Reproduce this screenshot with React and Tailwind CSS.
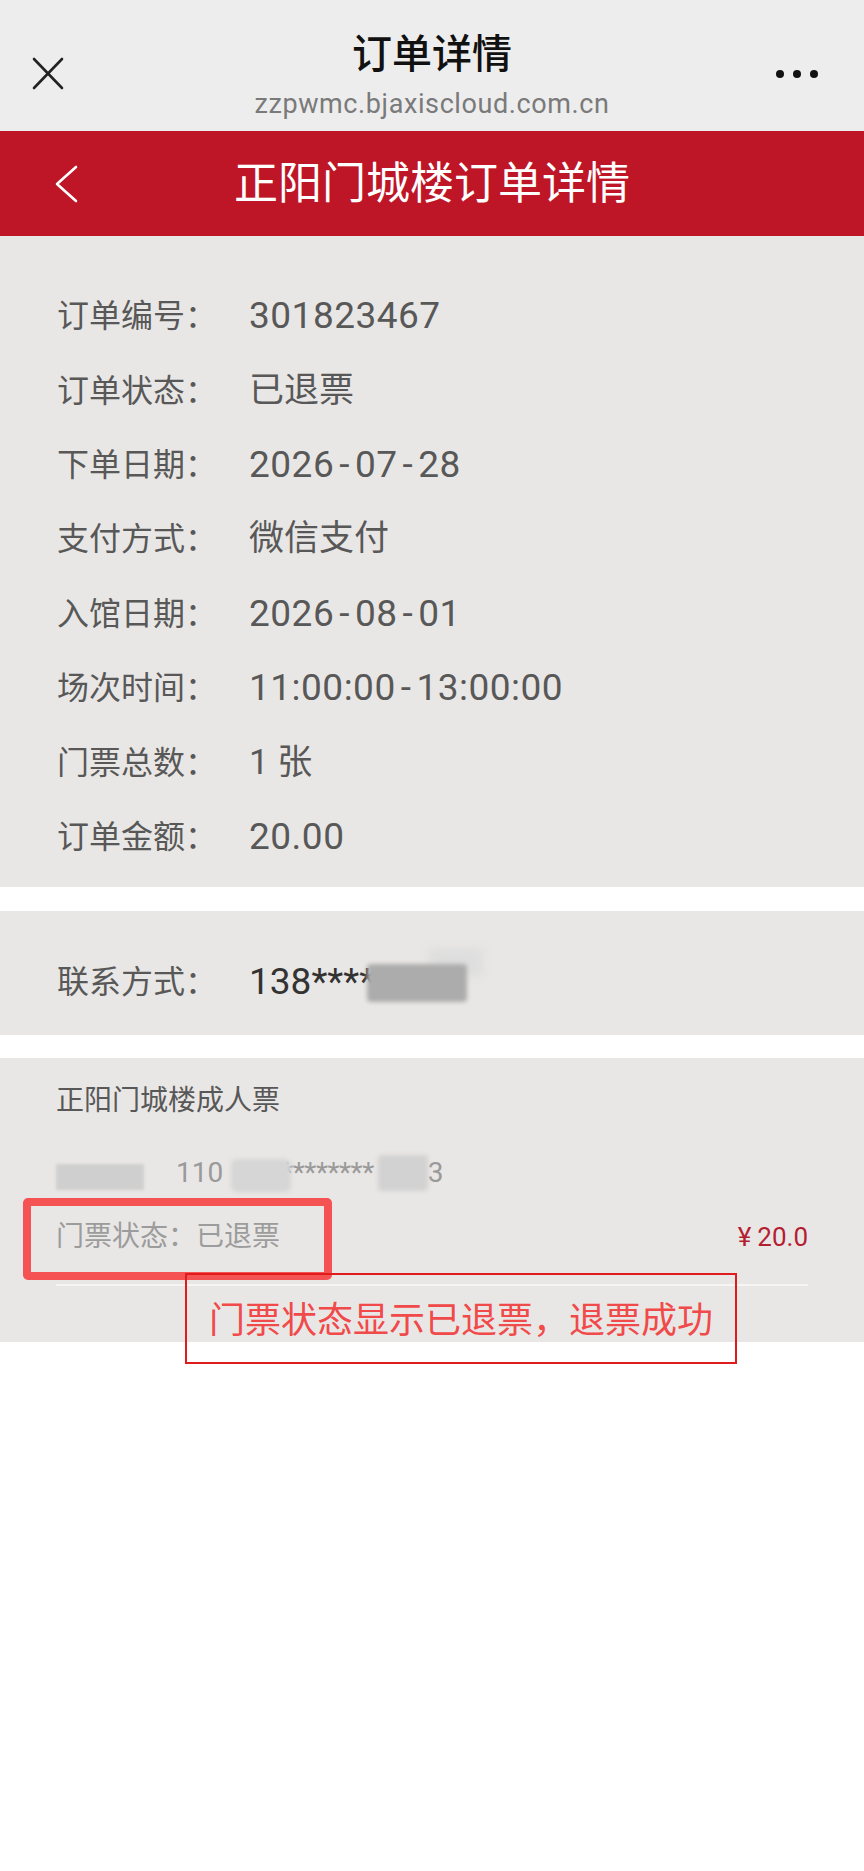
import React from "react";

const FONT = "font-['Roboto','Noto_Sans_CJK_SC',sans-serif]";

function Value({ text }) {
  const parts = text.split("-");
  return (
    <>
      {parts.map((p, i) => (
        <React.Fragment key={i}>
          {i > 0 && <span className="mx-[5px]">-</span>}
          {p}
        </React.Fragment>
      ))}
    </>
  );
}

function Row({ label, value, cjk }) {
  return (
    <div className="h-[74.4px] flex items-center">
      <div className="w-[192px] text-[32px] leading-[40px] text-[#585858]">{label}</div>
      <div className={`${cjk ? "text-[35px]" : "text-[37px] tracking-[0.5px]"} leading-[40px] text-[#585858]`}>
        <Value text={value} />
      </div>
    </div>
  );
}

export default function App() {
  const rows = [
    ["订单编号：", "301823467", false],
    ["订单状态：", "已退票", true],
    ["下单日期：", "2026-07-28", false],
    ["支付方式：", "微信支付", true],
    ["入馆日期：", "2026-08-01", false],
    ["场次时间：", "11:00:00-13:00:00", false],
    ["门票总数：", "1 张", true],
    ["订单金额：", "20.00", false],
  ];
  return (
    <div className={`relative w-[864px] min-h-[1871px] bg-white ${FONT}`}>
      {/* WeChat header */}
      <div className="h-[131px] bg-[#ededed] grid grid-cols-[1fr_auto_1fr] px-[32px] pt-[32px]">
        <div className="pt-[25px]">
          <svg width="32" height="33" viewBox="0 0 32 33">
            <line x1="2" y1="2" x2="30" y2="31" stroke="#222" strokeWidth="2.6" strokeLinecap="round" />
            <line x1="30" y1="2" x2="2" y2="31" stroke="#222" strokeWidth="2.6" strokeLinecap="round" />
          </svg>
        </div>
        <div className="flex flex-col items-center">
          <div className="text-[40px] leading-[46px] font-medium text-[#111]">订单详情</div>
          <div className="mt-[11px] text-[27px] leading-[30px] tracking-[0.6px] text-[#7a7a7a]">
            zzpwmc.bjaxiscloud.com.cn
          </div>
        </div>
        <div className="flex justify-end pt-[38px] pr-[14px]">
          <div className="flex gap-[9px]">
            <span className="w-[8px] h-[8px] rounded-full bg-[#111]"></span>
            <span className="w-[8px] h-[8px] rounded-full bg-[#111]"></span>
            <span className="w-[8px] h-[8px] rounded-full bg-[#111]"></span>
          </div>
        </div>
      </div>

      {/* Red title bar */}
      <div className="h-[105px] bg-[#be1527] grid grid-cols-[1fr_auto_1fr] items-center px-[55px]">
        <div>
          <svg width="23" height="38" viewBox="0 0 23 38">
            <polyline points="21,2 2,19 21,36" fill="none" stroke="#fff" strokeWidth="2.6" strokeLinecap="round" strokeLinejoin="round" />
          </svg>
        </div>
        <div className="text-[44px] leading-[50px] text-white">正阳门城楼订单详情</div>
        <div></div>
      </div>

      {/* Order info */}
      <div className="bg-[#e9e7e5] pt-[43px] pb-[13px] px-[57px]">
        {rows.map(([l, v, c]) => (
          <Row key={l} label={l} value={v} cjk={c} />
        ))}
      </div>

      <div className="h-[24px]"></div>

      {/* Contact */}
      <div className="h-[124px] bg-[#e9e7e5] px-[57px] pt-[51px] flex items-start">
        <div className="w-[192px] text-[32px] leading-[40px] text-[#585858]">联系方式：</div>
        <div className="text-[37px] leading-[40px] text-[#333]">138****</div>
        <div className="relative -ml-[8px] mt-[2px] w-[100px] h-[38px]">
          <div className="absolute left-[62px] -top-[16px] w-[54px] h-[28px] bg-[#dedede] blur-[4px]"></div>
          <div className="absolute inset-0 bg-[#acacac] blur-[2px] rounded-[4px]"></div>
        </div>
      </div>

      <div className="h-[23px]"></div>

      {/* Ticket */}
      <div className="bg-[#e9e7e5] px-[56px] pt-[25px] pb-[56px]">
        <div className="text-[28px] leading-[36px] text-[#585858]">正阳门城楼成人票</div>
        <div className="mt-[36px] h-[36px] flex items-center text-[28px] text-[#9a9a9a]">
          <div className="w-[88px] h-[26px] mt-[8px] bg-[#cfcfcf] blur-[1.5px]"></div>
          <span className="ml-[32px] leading-[36px]">110</span>
          <div className="relative w-[60px] h-[33px] ml-[8px] mt-[4px] bg-[#d6d6d6] blur-[2px] rounded-[6px] z-10"></div>
          <span className="-ml-[10px] leading-[36px] tracking-[-0.5px]">********</span>
          <div className="w-[50px] h-[36px] ml-[4px] bg-[#d2d2d2] blur-[2px] rounded-[4px]"></div>
          <span className="leading-[36px]">3</span>
        </div>
        <div className="mt-[28px] h-[36px] flex items-center justify-between">
          <span className="text-[28px] leading-[36px] text-[#9c9c9c]">门票状态：已退票</span>
          <span className="text-[26px] leading-[36px] text-[#b41e32]">
            <span className="mr-[6px]">¥</span>20.0
          </span>
        </div>
        <div className="mt-[29px] h-[2px] bg-[#f6f5f4]"></div>
      </div>

      {/* Annotations */}
      <div className="absolute left-[23px] top-[1198px] w-[309px] h-[82px] border-[8px] border-[#f55353] rounded-[5px]"></div>
      <div className="absolute left-[185px] top-[1273px] w-[552px] h-[91px] border-2 border-[#e01b1b] flex items-center justify-center pt-[4px]">
        <span className="text-[36px] leading-[42px] text-[#f04a4a]">门票状态显示已退票，退票成功</span>
      </div>
    </div>
  );
}
